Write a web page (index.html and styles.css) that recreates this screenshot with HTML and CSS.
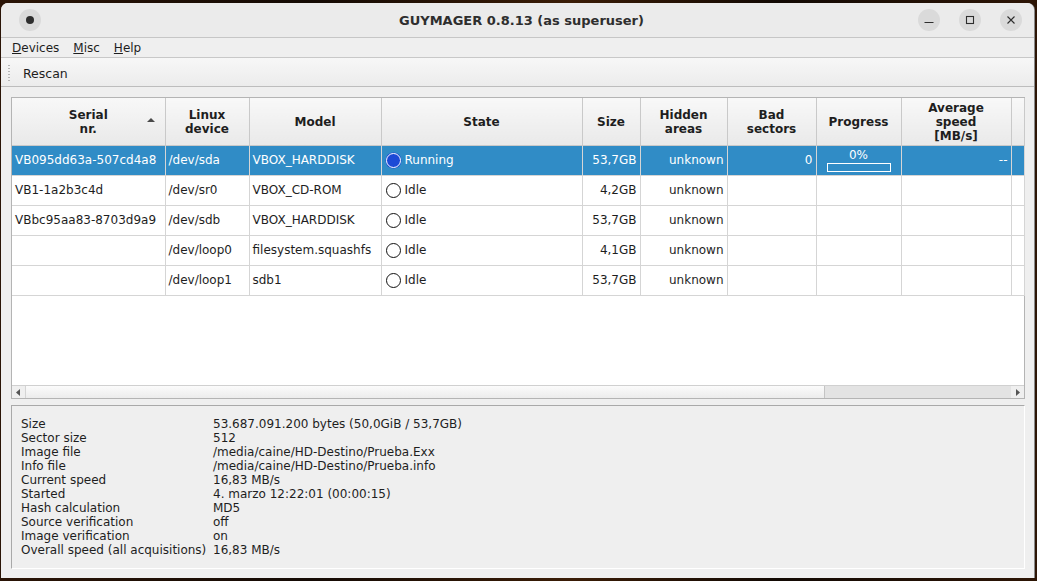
FILE: index.html
```html
<!DOCTYPE html>
<html>
<head>
<meta charset="utf-8">
<link rel="stylesheet" href="styles.css">
</head>
<body>
<div class="window">
  <div class="titlebar">
    <div class="tb-left"><span class="wbtn"><span class="dot"></span></span></div>
    <div class="title">GUYMAGER 0.8.13 (as superuser)</div>
    <div class="tb-right">
      <span class="wbtn"><svg width="12" height="12" viewBox="0 0 12 12"><path d="M1.5 8.5h9" stroke="#2e2e2e" stroke-width="1.2"/></svg></span>
      <span class="wbtn"><svg width="12" height="12" viewBox="0 0 12 12"><rect x="2.5" y="2.5" width="7" height="7" fill="none" stroke="#2e2e2e" stroke-width="1.1"/></svg></span>
      <span class="wbtn"><svg width="12" height="12" viewBox="0 0 12 12"><path d="M2.5 2.5l7 7M9.5 2.5l-7 7" stroke="#2e2e2e" stroke-width="1.1"/></svg></span>
    </div>
  </div>
  <div class="menubar">
    <span class="menu"><u>D</u>evices</span>
    <span class="menu"><u>M</u>isc</span>
    <span class="menu"><u>H</u>elp</span>
  </div>
  <div class="toolbar">
    <span class="handle"></span>
    <span class="tool">Rescan</span>
  </div>
  <div class="content">
    <div class="view">
      <table class="devices">
        <colgroup>
          <col class="c-serial"><col class="c-dev"><col class="c-model"><col class="c-state"><col class="c-size"><col class="c-hidden"><col class="c-bad"><col class="c-prog"><col class="c-speed"><col class="c-extra">
        </colgroup>
        <thead>
          <tr>
            <th class="sorted">Serial<br>nr.<span class="sort"></span></th>
            <th>Linux<br>device</th>
            <th>Model</th>
            <th>State</th>
            <th>Size</th>
            <th>Hidden<br>areas</th>
            <th>Bad<br>sectors</th>
            <th>Progress</th>
            <th>Average<br>speed<br>[MB/s]</th>
            <th></th>
          </tr>
        </thead>
        <tbody>
          <tr class="sel">
            <td>VB095dd63a-507cd4a8</td>
            <td>/dev/sda</td>
            <td>VBOX_HARDDISK</td>
            <td><div class="st"><span class="led run"></span>Running</div></td>
            <td class="r">53,7GB</td>
            <td class="r">unknown</td>
            <td class="r">0</td>
            <td class="prog"><div class="pct">0%</div><div class="bar"></div></td>
            <td class="r">--</td>
            <td></td>
          </tr>
          <tr>
            <td>VB1-1a2b3c4d</td>
            <td>/dev/sr0</td>
            <td>VBOX_CD-ROM</td>
            <td><div class="st"><span class="led"></span>Idle</div></td>
            <td class="r">4,2GB</td>
            <td class="r">unknown</td>
            <td></td><td></td><td></td><td></td>
          </tr>
          <tr>
            <td>VBbc95aa83-8703d9a9</td>
            <td>/dev/sdb</td>
            <td>VBOX_HARDDISK</td>
            <td><div class="st"><span class="led"></span>Idle</div></td>
            <td class="r">53,7GB</td>
            <td class="r">unknown</td>
            <td></td><td></td><td></td><td></td>
          </tr>
          <tr>
            <td></td>
            <td>/dev/loop0</td>
            <td>filesystem.squashfs</td>
            <td><div class="st"><span class="led"></span>Idle</div></td>
            <td class="r">4,1GB</td>
            <td class="r">unknown</td>
            <td></td><td></td><td></td><td></td>
          </tr>
          <tr>
            <td></td>
            <td>/dev/loop1</td>
            <td>sdb1</td>
            <td><div class="st"><span class="led"></span>Idle</div></td>
            <td class="r">53,7GB</td>
            <td class="r">unknown</td>
            <td></td><td></td><td></td><td></td>
          </tr>
        </tbody>
      </table>
      <div class="filler"></div>
      <div class="hscroll">
        <span class="arrow"><svg width="5" height="7" viewBox="0 0 5 7"><path d="M4 0v7L0 3.5z" fill="#555"/></svg></span>
        <span class="thumb"></span>
        <span class="track"></span>
        <span class="arrow"><svg width="5" height="7" viewBox="0 0 5 7"><path d="M1 0v7l4-3.5z" fill="#555"/></svg></span>
      </div>
    </div>
    <div class="info">
      <div class="lbl">Size</div><div>53.687.091.200 bytes (50,0GiB / 53,7GB)</div>
      <div class="lbl">Sector size</div><div>512</div>
      <div class="lbl">Image file</div><div>/media/caine/HD-Destino/Prueba.Exx</div>
      <div class="lbl">Info file</div><div>/media/caine/HD-Destino/Prueba.info</div>
      <div class="lbl">Current speed</div><div>16,83 MB/s</div>
      <div class="lbl">Started</div><div>4. marzo 12:22:01 (00:00:15)</div>
      <div class="lbl">Hash calculation</div><div>MD5</div>
      <div class="lbl">Source verification</div><div>off</div>
      <div class="lbl">Image verification</div><div>on</div>
      <div class="lbl">Overall speed (all acquisitions)</div><div>16,83 MB/s</div>
    </div>
  </div>
</div>
</body>
</html>
```

FILE: styles.css
```css
* { box-sizing: border-box; }
html, body { margin: 0; padding: 0; }
body {
  width: 1037px;
  height: 581px;
  overflow: hidden;
  background: linear-gradient(90deg, #2a1406 0%, #140a04 30%, #3a1c06 55%, #120903 75%, #2d1505 100%);
  font-family: "DejaVu Sans", sans-serif;
  font-size: 12px;
  color: #1e1e1e;
  padding-top: 3px;
  padding-left: 1px;
}
.window {
  width: 1033px;
  height: 575px;
  background: #efefef;
  border-radius: 7px 7px 0 0;
  display: flex;
  flex-direction: column;
  overflow: hidden;
  box-shadow: 1px 0 0 #8a8a8a;
}
.titlebar {
  height: 35px;
  flex: none;
  display: grid;
  grid-template-columns: 1fr auto 1fr;
  align-items: center;
  background: #ebebeb;
  border-bottom: 1px solid #c6c6c6;
  padding: 0 12px 0 18px;
}
.title {
  font-weight: bold;
  font-size: 13px;
  color: #2e2e2e;
  padding-left: 2px;
}
.tb-right { display: flex; justify-content: flex-end; gap: 19px; }
.wbtn {
  width: 22px; height: 22px;
  border-radius: 50%;
  background: #dadada;
  display: inline-flex;
  align-items: center;
  justify-content: center;
}
.dot { width: 8px; height: 8px; border-radius: 50%; background: #2e2e2e; }
.menubar {
  height: 20px;
  flex: none;
  display: flex;
  align-items: center;
  padding-left: 4px;
  border-bottom: 1px solid #c8c8c8;
  background: #efefef;
  font-size: 12px;
}
.menu { padding: 0 7px; }
.toolbar {
  height: 29px;
  flex: none;
  display: flex;
  align-items: center;
  background: linear-gradient(#f7f7f7, #ececec);
  border-bottom: 1px solid #bdbdbd;
  padding-left: 7px;
  padding-top: 2px;
  font-size: 12.5px;
}
.handle {
  width: 2px;
  height: 16px;
  background: repeating-linear-gradient(#b5b5b5 0 1px, transparent 1px 3px);
  margin-right: 13px;
}
.content {
  flex: 1;
  padding: 10px 9px 11px 10px;
  display: flex;
  flex-direction: column;
  gap: 6px;
}
.view {
  height: 302px;
  flex: none;
  border: 1px solid #b4b4b4;
  background: #fff;
  display: flex;
  flex-direction: column;
}
.devices {
  border-collapse: collapse;
  table-layout: fixed;
  width: 1012px;
  flex: none;
}
.c-serial { width: 153px; }
.c-dev { width: 84px; }
.c-model { width: 132px; }
.c-state { width: 201px; }
.c-size { width: 58px; }
.c-hidden { width: 87px; }
.c-bad { width: 89px; }
.c-prog { width: 85px; }
.c-speed { width: 110px; }
.c-extra { width: 13px; }
th {
  height: 47px;
  padding: 2px 0 0;
  font-weight: bold;
  font-size: 12px;
  line-height: 14px;
  color: #1e1e1e;
  background: linear-gradient(#f8f8f8, #e9e9e9);
  border-right: 1px solid #c9c9c9;
  border-bottom: 1px solid #c9c9c9;
  text-align: center;
  position: relative;
}
.sort {
  position: absolute;
  right: 10px;
  top: 20px;
  width: 0; height: 0;
  border-left: 4px solid transparent;
  border-right: 4px solid transparent;
  border-bottom: 4px solid #4a4a4a;
}
td {
  height: 30px;
  padding: 0 3px;
  border-right: 1px solid #d5d5d5;
  border-bottom: 1px solid #d5d5d5;
  white-space: nowrap;
  overflow: hidden;
  font-size: 12px;
  color: #1e1e1e;
}
td.r { text-align: right; padding-right: 3px; }
tr.sel td { background: #308cc6; color: #fff; }
.st { display: flex; align-items: center; gap: 4px; padding-left: 1px; }
.led {
  width: 15px; height: 15px;
  flex: none;
  border-radius: 50%;
  border: 1px solid #111;
  background: #fff;
}
.led.run { background: #1c49d6; border-color: #fff; box-shadow: 0 0 0 0.5px #1c49d6; }
td.prog { text-align: center; padding: 0 10px; vertical-align: top; }
.pct { line-height: 14px; margin-top: 2px; }
.bar { height: 9px; border: 1px solid #fff; margin-top: 1px; }
.filler { flex: 1; }
.hscroll {
  height: 13px;
  flex: none;
  display: flex;
  border-top: 1px solid #d0d0d0;
  background: #e3e3e3;
}
.arrow {
  width: 13px;
  display: flex;
  align-items: center;
  justify-content: center;
  background: #efefef;
}
.thumb {
  width: 800px;
  background: linear-gradient(#fbfbfb, #ececec);
  border-right: 1px solid #c4c4c4;
  border-left: 1px solid #d4d4d4;
}
.track { flex: 1; background: #e3e3e3; }
.info {
  flex: 1;
  border: 1px solid;
  border-color: #a9a9a9 #fff #fff #a9a9a9;
  background: #efefef;
  padding: 11px 9px;
  display: grid;
  grid-template-columns: 192px 1fr;
  grid-auto-rows: 14px;
  line-height: 14px;
  font-size: 12px;
  color: #1e1e1e;
  align-content: start;
}
```
